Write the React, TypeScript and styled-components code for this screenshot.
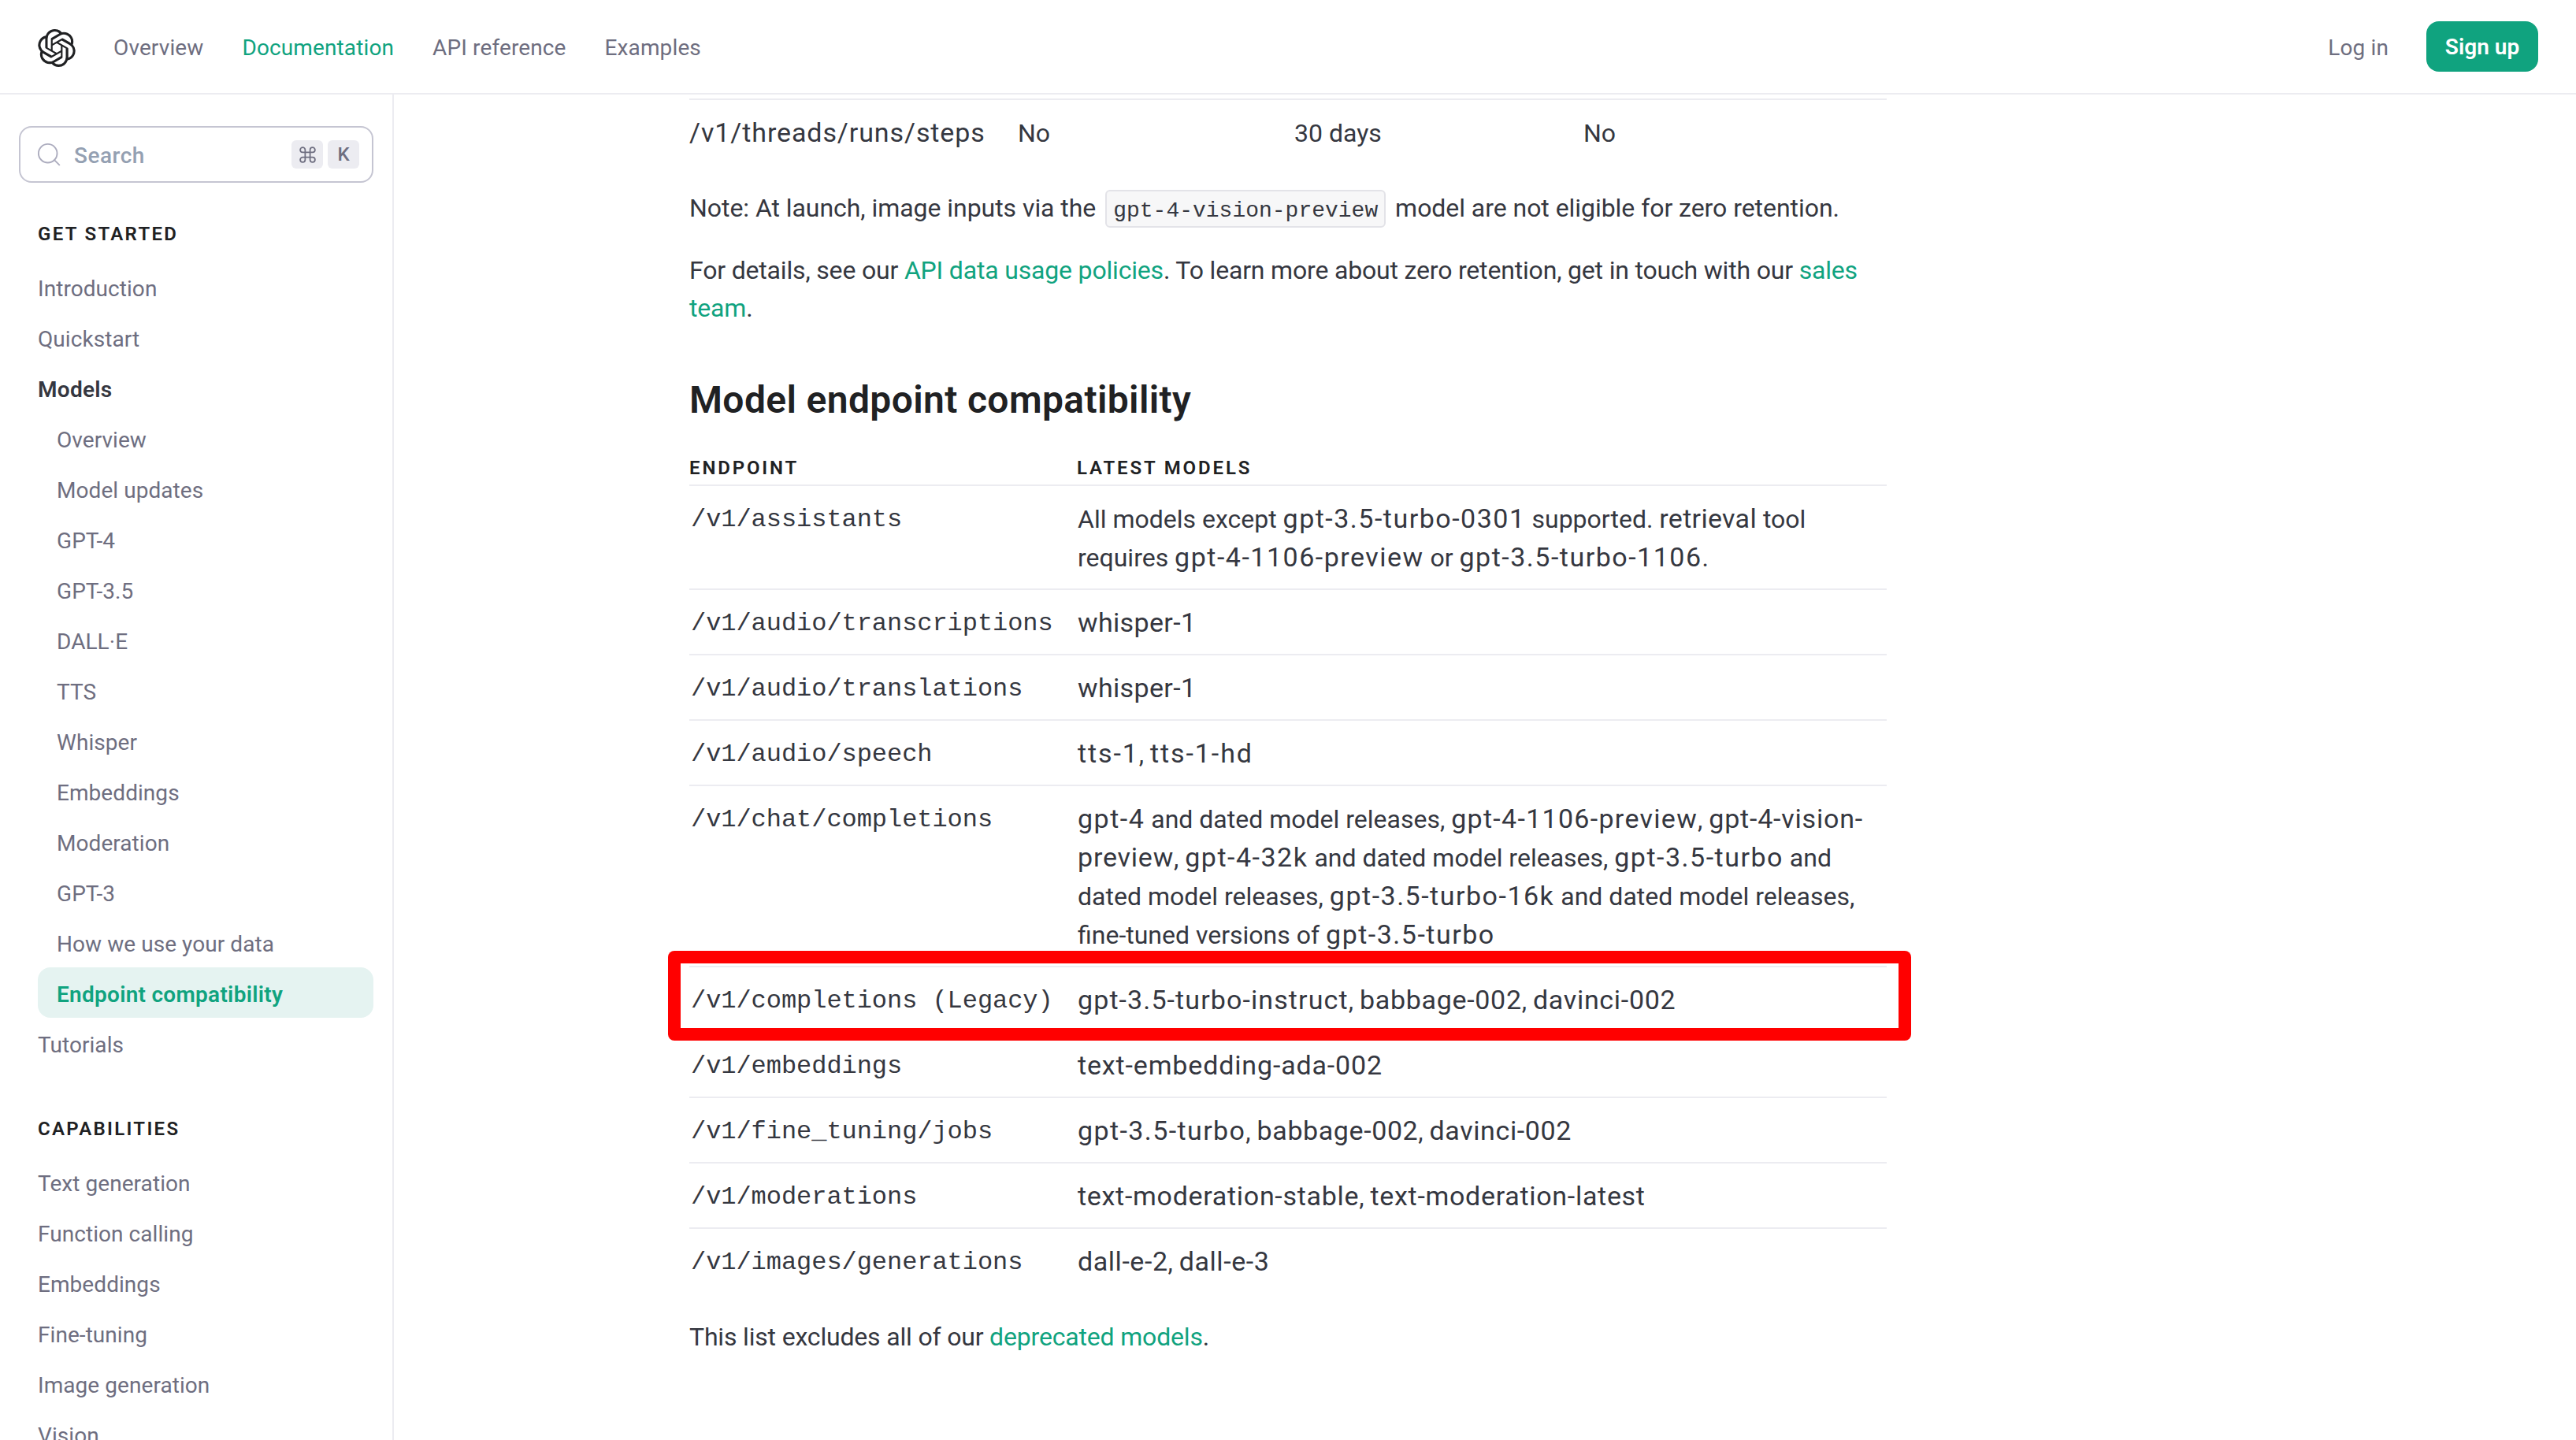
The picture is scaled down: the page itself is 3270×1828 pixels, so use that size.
import React from 'react';
import styled, { createGlobalStyle } from 'styled-components';
import { Command } from 'lucide-react';
import { SiOpenai } from 'react-icons/si';

const GlobalStyle = createGlobalStyle`
  *, *::before, *::after {
    box-sizing: border-box;
  }

  body {
    margin: 0;
    overflow: hidden;
    background: #ffffff;
    color: #353740;
    font-family: Roboto, 'Liberation Sans', sans-serif;
    font-size: 32px;
  }
`;

const Page = styled.div`
  height: 1828px;
  display: flex;
  flex-direction: column;
  overflow: hidden;
`;

const Header = styled.header`
  height: 120px;
  flex-shrink: 0;
  display: flex;
  align-items: center;
  padding: 0 48px;
  border-bottom: 2px solid #ececf1;
`;

const Logo = styled(SiOpenai)`
  width: 48px;
  height: 48px;
  margin-top: 4px;
  color: #202123;
`;

const Nav = styled.nav`
  display: flex;
  flex: 1;
  gap: 49px;
  padding-left: 48px;
`;

const NavLink = styled.a<{ $active?: boolean }>`
  padding-top: 4px;
  font-size: 28px;
  line-height: 40px;
  letter-spacing: 0.12px;
  color: ${({ $active }) => ($active ? '#10a37f' : '#6e6e80')};
`;

const HeaderActions = styled.div`
  display: flex;
  align-items: center;
  gap: 48px;
`;

const SignUpButton = styled.button`
  width: 142px;
  height: 64px;
  padding: 0;
  border: none;
  border-radius: 16px;
  background: #10a37f;
  color: #ffffff;
  font-family: inherit;
  font-size: 28px;
  font-weight: 600;
  cursor: pointer;
`;

const Body = styled.div`
  flex: 1;
  min-height: 0;
  display: flex;
`;

const Sidebar = styled.aside`
  width: 500px;
  flex-shrink: 0;
  padding: 40px 24px 0;
  border-right: 2px solid #ececf1;
  overflow: hidden;
`;

const SearchBox = styled.div`
  display: flex;
  align-items: center;
  height: 72px;
  padding: 0 16px 0 20px;
  border: 2px solid #c5c5d2;
  border-radius: 16px;
`;

const SearchLabel = styled.span`
  flex: 1;
  padding: 3px 0 0 16px;
  color: #94a0b2;
  font-size: 28px;
  font-weight: 500;
  letter-spacing: 0.5px;
`;

const Key = styled.kbd`
  display: flex;
  align-items: center;
  justify-content: center;
  width: 40px;
  height: 36px;
  margin-left: 6px;
  border-radius: 6px;
  background: #ececf1;
  color: #6e6e80;
  font-family: inherit;
  font-size: 24px;
  font-weight: 500;
`;

const SectionTitle = styled.h3<{ $first?: boolean }>`
  margin: ${({ $first }) => ($first ? '45px' : '57px')} 0 15px 24px;
  color: #202123;
  font-size: 24px;
  font-weight: 600;
  line-height: 40px;
  letter-spacing: 2.3px;
  text-transform: uppercase;
`;

const NavItem = styled.a<{ $nested?: boolean; $state?: 'open' | 'active' }>`
  display: block;
  height: 64px;
  margin-left: 24px;
  padding: 5px 0 0 ${({ $nested }) => ($nested ? '24px' : '0')};
  border-radius: 16px;
  background: ${({ $state }) => ($state === 'active' ? '#e5f3f1' : 'transparent')};
  color: ${({ $state }) =>
    $state === 'active' ? '#10a37f' : $state === 'open' ? '#353740' : '#6e6e80'};
  font-size: 28px;
  font-weight: ${({ $state }) => ($state ? 600 : 400)};
  line-height: 59px;
  letter-spacing: ${({ $state }) => ($state ? '0.27px' : '0.06px')};
`;

const Content = styled.main`
  width: 1520px;
  margin-left: 375px;
  padding-top: 5px;
`;

const Paragraph = styled.p<{ $gap?: number; $spacing?: number }>`
  margin: ${({ $gap = 32 }) => $gap}px 0 0;
  line-height: 48px;
  letter-spacing: ${({ $spacing = 0 }) => $spacing}px;
`;

const Link = styled.a`
  color: #10a37f;
`;

const InlineCode = styled.code`
  display: inline-block;
  margin: 0 4px;
  padding: 6px 8px 0;
  border: 2px solid #e3e3e8;
  border-radius: 6px;
  background: #f7f7f8;
  font-family: 'Liberation Mono', monospace;
  font-size: 28px;
  line-height: 38px;
  letter-spacing: 0;
`;

const Heading = styled.h2`
  margin: 61px 0 34px;
  color: #202123;
  font-size: 48px;
  font-weight: 600;
  line-height: 64px;
  letter-spacing: 0.36px;
`;

const RetentionRow = styled.div`
  display: grid;
  grid-template-columns: 417px 351px 367px 1fr;
  padding: 18px 0 14px;
  border-top: 2px solid #ececf1;
  line-height: 49px;
`;

const TableHead = styled.div`
  display: grid;
  grid-template-columns: 492px 1fr;
  height: 43px;
  border-bottom: 2px solid #ececf1;
  color: #202123;
  font-size: 24px;
  font-weight: 600;
  line-height: 40px;
  letter-spacing: 2.85px;
`;

const TableRow = styled.div`
  position: relative;
  display: grid;
  grid-template-columns: 493px 1fr;
  padding: 18px 0 14px;
  border-bottom: 2px solid #ececf1;
  line-height: 49px;

  &:last-child {
    border-bottom: none;
  }
`;

const Endpoint = styled.span`
  padding-left: 2px;
  font-family: 'Liberation Mono', monospace;
  letter-spacing: -0.05px;
  white-space: nowrap;
`;

const Models = styled.span`
  padding-right: 4px;
`;

const ModelName = styled.span<{ $spacing?: number }>`
  font-size: 34px;
  line-height: 1;
  letter-spacing: ${({ $spacing = 1.5 }) => $spacing}px;
`;

const Highlight = styled.div`
  position: absolute;
  top: -21px;
  right: -31px;
  bottom: -12px;
  left: -27px;
  border-radius: 8px;
  overflow: hidden;

  &::after {
    content: '';
    display: block;
    height: 100%;
    border: 16px solid #ff0000;
  }
`;

const SearchIcon = () => (
  <svg width="32" height="32" viewBox="0 0 32 32" fill="none" stroke="#acacbe" strokeWidth="1.9">
    <circle cx="14.7" cy="14.7" r="11.8" />
    <path d="M22.8 22.8 29.8 29.8" />
  </svg>
);

const modelPages = [
  'Overview',
  'Model updates',
  'GPT-4',
  'GPT-3.5',
  'DALL·E',
  'TTS',
  'Whisper',
  'Embeddings',
  'Moderation',
  'GPT-3',
  'How we use your data',
];

const capabilities = [
  'Text generation',
  'Function calling',
  'Embeddings',
  'Fine-tuning',
  'Image generation',
  'Vision',
];

interface EndpointRow {
  path: string;
  models: React.ReactNode;
  highlighted?: boolean;
}

const endpoints: EndpointRow[] = [
  {
    path: '/v1/assistants',
    models: (
      <>
        All models except <ModelName>gpt-3.5-turbo-0301</ModelName> supported.{' '}
        <ModelName $spacing={0.3}>retrieval</ModelName> tool requires{' '}
        <ModelName>gpt-4-1106-preview</ModelName> or <ModelName>gpt-3.5-turbo-1106</ModelName>.
      </>
    ),
  },
  { path: '/v1/audio/transcriptions', models: <ModelName $spacing={0.36}>whisper-1</ModelName> },
  { path: '/v1/audio/translations', models: <ModelName $spacing={0.36}>whisper-1</ModelName> },
  {
    path: '/v1/audio/speech',
    models: (
      <>
        <ModelName $spacing={1.9}>tts-1</ModelName>, <ModelName $spacing={1.9}>tts-1-hd</ModelName>
      </>
    ),
  },
  {
    path: '/v1/chat/completions',
    models: (
      <>
        <ModelName>gpt-4</ModelName> and dated model releases,{' '}
        <ModelName $spacing={1.3}>gpt-4-1106-preview</ModelName>,{' '}
        <ModelName $spacing={0.8}>gpt-4-vision-preview</ModelName>, <ModelName>gpt-4-32k</ModelName>{' '}
        and dated model releases, <ModelName>gpt-3.5-turbo</ModelName> and dated model releases,{' '}
        <ModelName>gpt-3.5-turbo-16k</ModelName> and dated model releases, fine-tuned versions of{' '}
        <ModelName>gpt-3.5-turbo</ModelName>
      </>
    ),
  },
  {
    path: '/v1/completions (Legacy)',
    highlighted: true,
    models: (
      <>
        <ModelName $spacing={1.1}>gpt-3.5-turbo-instruct</ModelName>,{' '}
        <ModelName $spacing={0.7}>babbage-002</ModelName>,{' '}
        <ModelName $spacing={0.7}>davinci-002</ModelName>
      </>
    ),
  },
  {
    path: '/v1/embeddings',
    models: <ModelName $spacing={0.85}>text-embedding-ada-002</ModelName>,
  },
  {
    path: '/v1/fine_tuning/jobs',
    models: (
      <>
        <ModelName $spacing={1.4}>gpt-3.5-turbo</ModelName>,{' '}
        <ModelName $spacing={0.6}>babbage-002</ModelName>,{' '}
        <ModelName $spacing={0.6}>davinci-002</ModelName>
      </>
    ),
  },
  {
    path: '/v1/moderations',
    models: (
      <>
        <ModelName $spacing={0.7}>text-moderation-stable</ModelName>,{' '}
        <ModelName $spacing={0.7}>text-moderation-latest</ModelName>
      </>
    ),
  },
  {
    path: '/v1/images/generations',
    models: (
      <>
        <ModelName $spacing={0.55}>dall-e-2</ModelName>,{' '}
        <ModelName $spacing={0.55}>dall-e-3</ModelName>
      </>
    ),
  },
];

const App: React.FC = () => {
  return (
    <>
      <GlobalStyle />
      <Page>
        <Header>
          <Logo />
          <Nav>
            <NavLink>Overview</NavLink>
            <NavLink $active>Documentation</NavLink>
            <NavLink>API reference</NavLink>
            <NavLink>Examples</NavLink>
          </Nav>
          <HeaderActions>
            <NavLink>Log in</NavLink>
            <SignUpButton>Sign up</SignUpButton>
          </HeaderActions>
        </Header>
        <Body>
          <Sidebar>
            <SearchBox>
              <SearchIcon />
              <SearchLabel>Search</SearchLabel>
              <Key>
                <Command size={25} strokeWidth={1.7} />
              </Key>
              <Key>K</Key>
            </SearchBox>
            <SectionTitle $first>Get started</SectionTitle>
            <NavItem>Introduction</NavItem>
            <NavItem>Quickstart</NavItem>
            <NavItem $state="open">Models</NavItem>
            {modelPages.map((page) => (
              <NavItem key={page} $nested>
                {page}
              </NavItem>
            ))}
            <NavItem $nested $state="active">
              Endpoint compatibility
            </NavItem>
            <NavItem>Tutorials</NavItem>
            <SectionTitle>Capabilities</SectionTitle>
            {capabilities.map((page) => (
              <NavItem key={page}>{page}</NavItem>
            ))}
          </Sidebar>
          <Content>
            <RetentionRow>
              <span>
                <ModelName $spacing={0.9}>/v1/threads/runs/steps</ModelName>
              </span>
              <span>No</span>
              <span>30 days</span>
              <span>No</span>
            </RetentionRow>
            <Paragraph $spacing={-0.05}>
              Note: At launch, image inputs via the <InlineCode>gpt-4-vision-preview</InlineCode> model
              are not eligible for zero retention.
            </Paragraph>
            <Paragraph $gap={30} $spacing={-0.18}>
              For details, see our <Link>API data usage policies</Link>. To learn more about zero
              retention, get in touch with our <Link>sales team</Link>.
            </Paragraph>
            <Heading>Model endpoint compatibility</Heading>
            <TableHead>
              <span>ENDPOINT</span>
              <span>LATEST MODELS</span>
            </TableHead>
            <div>
              {endpoints.map(({ path, models, highlighted }) => (
                <TableRow key={path}>
                  <Endpoint>{path}</Endpoint>
                  <Models>{models}</Models>
                  {highlighted && <Highlight />}
                </TableRow>
              ))}
            </div>
            <Paragraph $spacing={-0.18}>
              This list excludes all of our <Link>deprecated models</Link>.
            </Paragraph>
          </Content>
        </Body>
      </Page>
    </>
  );
};

export default App;
